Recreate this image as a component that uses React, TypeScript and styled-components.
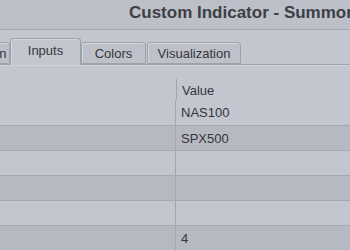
import styled, { createGlobalStyle } from 'styled-components';

const GlobalStyle = createGlobalStyle`
	html, body {
		margin: 0;
		padding: 0;
		background: #c3c6ce;
		overflow: hidden;
	}
`;

const rows = [
	{ value: 'NAS100', shade: false },
	{ value: 'SPX500', shade: true },
	{ value: '', shade: false },
	{ value: '', shade: true },
	{ value: '', shade: false },
	{ value: '4', shade: true },
];

const tabs = [
	{ label: 'Inputs', width: 71, active: true },
	{ label: 'Colors', width: 65, active: false },
	{ label: 'Visualization', width: 94, active: false },
];

export default function App() {
	return (
		<Window>
			<GlobalStyle />
			<TitleBar>
				<Title>Custom Indicator - Summoner</Title>
			</TitleBar>
			<TabStrip>
				<Tab $width={60} $offset={-50}>Common</Tab>
				{tabs.map((t, i) => (
					<Tab key={t.label} $width={t.width} $active={t.active} $offset={i === 2 ? 1 : 0}>
						{t.label}
					</Tab>
				))}
			</TabStrip>
			<Panel>
				<Grid>
					<HeaderCell />
					<HeaderCell $value>Value</HeaderCell>
					{rows.map((r, i) => (
						<Row key={i} $shade={r.shade} $first={i === 0}>
							<NameCell />
							<ValueCell>{r.value}</ValueCell>
						</Row>
					))}
				</Grid>
			</Panel>
		</Window>
	);
}

const Window = styled.div`
	width: 350px;
	height: 250px;
	overflow: hidden;
	background: #c3c6ce;
	font-family: 'Liberation Sans', Arial, sans-serif;
	color: #35383e;
`;

const TitleBar = styled.div`
	height: 30px;
	box-sizing: border-box;
	border-bottom: 1px solid #a7aab2;
	background: #bdc0c8;
	padding-left: 129px;
	overflow: hidden;
`;

const Title = styled.div`
	font-weight: 700;
	font-size: 17px;
	line-height: 26px;
	color: #3c3f46;
	white-space: nowrap;
`;

const TabStrip = styled.div`
	display: flex;
	align-items: flex-end;
	height: 26px;
	margin-top: 8px;
	border-bottom: 1px solid #9fa2aa;
	box-shadow: 0 1px 0 #d0d3da;
`;

const Tab = styled.div<{ $width: number; $active?: boolean; $offset?: number }>`
	flex: none;
	box-sizing: border-box;
	width: ${({ $width }) => $width}px;
	height: ${({ $active }) => ($active ? 27 : 22)}px;
	margin-left: ${({ $offset }) => $offset ?? 0}px;
	margin-bottom: ${({ $active }) => ($active ? -1 : 0)}px;
	border: 1px solid #9fa2aa;
	border-bottom: ${({ $active }) => ($active ? 'none' : '1px solid #9fa2aa')};
	border-radius: 3px 3px 0 0;
	background: ${({ $active }) => ($active ? '#c3c6ce' : '#bec1c9')};
	box-shadow: inset 1px 1px 0 #d3d6dd;
	display: flex;
	justify-content: center;
	align-items: center;
	padding-bottom: ${({ $active }) => ($active ? 3 : 0)}px;
	font-size: 13px;
	color: #34373d;
	white-space: nowrap;
	overflow: hidden;
	position: relative;
	z-index: ${({ $active }) => ($active ? 1 : 0)};
`;

const Panel = styled.div`
	padding-top: 14px;
`;

const Grid = styled.div`
	display: flex;
	flex-direction: column;
`;

const HeaderCell = styled.div<{ $value?: boolean }>`
	display: ${({ $value }) => ($value ? 'block' : 'none')};
	margin-left: 176px;
	height: 21px;
	box-sizing: border-box;
	border-left: 1px solid #a3a6ae;
	padding: 5px 0 0 5px;
	font-size: 13px;
	line-height: 14px;
`;

const Row = styled.div<{ $shade: boolean; $first: boolean }>`
	display: grid;
	grid-template-columns: 176px 1fr;
	height: 25px;
	box-sizing: border-box;
	border-top: ${({ $first }) => ($first ? 'none' : '1px solid #a5a8b0')};
	background: ${({ $shade }) => ($shade ? '#b6b9c1' : '#c3c6ce')};
`;

const NameCell = styled.div`
	border-right: 1px solid #a3a6ae;
`;

const ValueCell = styled.div`
	padding: 6px 0 0 5px;
	font-size: 13px;
	line-height: 14px;
	color: #33363c;
`;
